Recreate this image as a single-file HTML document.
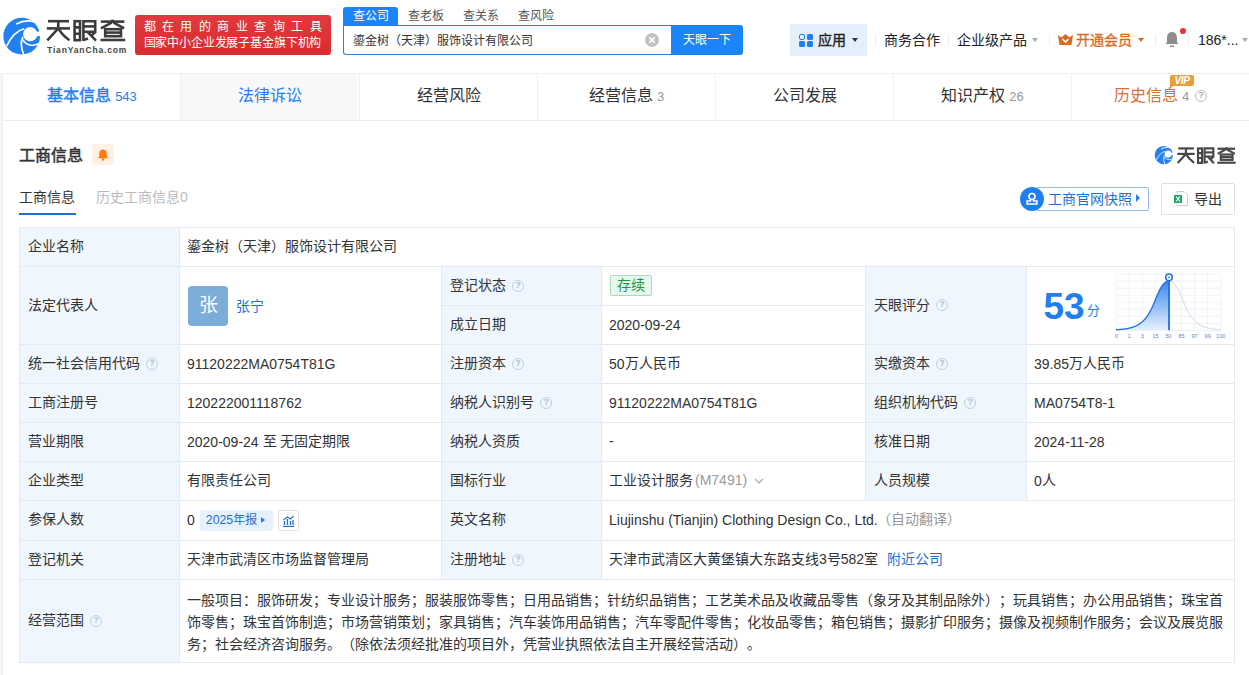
<!DOCTYPE html>
<html lang="zh-CN"><head><meta charset="utf-8">
<style>
*{margin:0;padding:0;box-sizing:border-box}
html,body{width:1249px;height:675px;overflow:hidden}
body{text-spacing-trim:space-all;background:#f5f5f5;font-family:"Liberation Sans",sans-serif;color:#333;font-size:14px;position:relative}
.a{position:absolute;white-space:nowrap}
#hdr{position:absolute;left:0;top:0;width:1249px;height:73px;background:#fff}
#tabs{position:absolute;left:3px;top:74px;width:1246px;height:47px;background:#fff;box-shadow:-1px 0 0 #efefef,0 -1px 0 #efefef;border-bottom:1px solid #ececec}
.tab{position:absolute;top:0;height:46px;width:178px;text-align:center;font-size:16px;line-height:44px;color:#333;border-left:1px solid #f0f0f0}
.tab .n{font-size:14px;color:#999;margin-left:4px}
#card{position:absolute;left:3px;top:121px;width:1246px;height:554px;background:#fff;box-shadow:-1px 0 0 #efefef}
table{position:absolute;left:19px;top:227px;width:1215px;border-collapse:collapse;table-layout:fixed}
td{border:1px solid #e5eaf0;font-size:14px;line-height:22px;padding:7px 8px 9px 7px;vertical-align:middle;color:#333}
td.l{background:#f0f6fd;padding-left:8px}
.d{position:relative;top:1px}
.q{display:inline-block;width:12px;height:12px;border:1.2px solid #bfcfe2;border-radius:50%;font-size:8.5px;line-height:9.6px;text-align:center;color:#aabfd8;font-weight:bold;vertical-align:middle;margin-left:6px;position:relative;top:-0.5px}
</style></head><body>
<div id="hdr">
  <!-- logo -->
  <svg class="a" style="left:0px;top:12px" width="46" height="48" viewBox="0 0 647 675">
    <circle cx="305" cy="340" r="258" fill="#2181f0"/>
    <circle cx="425" cy="312" r="100" fill="#fff"/>
    <path d="M470 290 L660 250 L660 330 L480 345 Z" fill="#fff"/>
    <path d="M228 168 C 320 120 420 110 520 150" stroke="#fff" stroke-width="26" fill="none"/>
    <path d="M95 475 C 160 340 240 260 340 235" stroke="#fff" stroke-width="24" fill="none"/>
    <path d="M335 600 C 300 520 290 420 320 350" stroke="#fff" stroke-width="24" fill="none"/>
    <path d="M320 390 C 370 470 460 490 560 440" stroke="#fff" stroke-width="22" fill="none"/>
  </svg>
  <svg class="a" style="left:45px;top:18px" width="82" height="25" viewBox="45 18 82 25"><g stroke="#3c3c3c" stroke-width="2.6" fill="none" stroke-linecap="butt" stroke-linejoin="miter">
<path d="M48 21.2 H69"/><path d="M46.8 28.4 H70"/><path d="M58.3 21.2 V28.4"/>
<path d="M58.3 28.4 L47.3 40.4"/><path d="M58.3 28.4 Q62 35 69.4 40.2"/>
<rect x="74.6" y="21.2" width="5.4" height="19"/><path d="M74.6 27.4 H80 M74.6 33.8 H80"/>
<path d="M83.4 40.9 V21.2 H95.2 V31.8 H83.4"/><path d="M83.4 26.4 H95.2"/>
<path d="M87.5 31.8 L96 40.6"/><path d="M95.6 31.8 L91.8 35.2"/><path d="M83.4 40 L88 38.4"/>
<path d="M100.8 21.6 H124.4"/><path d="M112.6 19.6 V23"/><path d="M111.6 22.6 L101 28.4"/><path d="M113.6 22.6 L124.2 28.4"/>
<rect x="105.2" y="29.2" width="15.8" height="7"/><path d="M105.2 32.6 H121"/>
<path d="M100.5 40 H125.2"/>
</g></svg>
  <div class="a" style="left:47px;top:44.5px;font-size:8.5px;line-height:10px;font-weight:bold;color:#444;letter-spacing:0.85px">TianYanCha.com</div>
  <!-- banner -->
  <div class="a" style="left:135px;top:15px;width:196px;height:40px;background:linear-gradient(180deg,#e13a3d,#d92c31);border-radius:3px"></div>
  <div class="a" style="left:143.5px;top:19px;font-size:12px;line-height:16px;color:#fff;letter-spacing:6.45px">都在用的商业查询工具</div>
  <div class="a" style="left:143.5px;top:35px;font-size:12px;line-height:16px;color:#fff;letter-spacing:-0.15px">国家中小企业发展子基金旗下机构</div>
  <!-- search -->
  <div class="a" style="left:343px;top:7px;width:55px;height:19px;background:#1b84f8;border-radius:3px 3px 0 0;color:#fff;font-size:12px;line-height:18px;text-align:center">查公司</div>
  <div class="a" style="left:408px;top:7px;font-size:12px;line-height:18px;color:#555">查老板</div>
  <div class="a" style="left:463px;top:7px;font-size:12px;line-height:18px;color:#555">查关系</div>
  <div class="a" style="left:518px;top:7px;font-size:12px;line-height:18px;color:#555">查风险</div>
  <div class="a" style="left:343px;top:25px;width:330px;height:30px;border:1px solid #2a7fe0;border-right:none;border-radius:0 0 0 3px;background:#fff"></div>
  <div class="a" style="left:353px;top:32px;font-size:12px;line-height:18px;color:#333">鎏金树（天津）服饰设计有限公司</div>
  <svg class="a" style="left:645px;top:32.5px" width="14" height="14" viewBox="0 0 14 14"><circle cx="7" cy="7" r="7" fill="#c2c2c2"/><path d="M4.4 4.4 L9.6 9.6 M9.6 4.4 L4.4 9.6" stroke="#fff" stroke-width="1.5"/></svg>
  <div class="a" style="left:671px;top:25px;width:72px;height:30px;background:#1b84f8;border-radius:0 3px 3px 0;color:#fff;font-size:12px;line-height:30px;text-align:center;letter-spacing:0.2px">天眼一下</div>
  <!-- right nav -->
  <div class="a" style="left:790px;top:24px;width:77px;height:32px;background:#e4effc"></div>
  <div class="a" style="left:799px;top:34px;width:6px;height:6px;border:1.5px solid #1f7ef0;border-radius:2px"></div>
  <div class="a" style="left:807px;top:34px;width:6px;height:6px;background:#1f7ef0;border-radius:1.5px"></div>
  <div class="a" style="left:799px;top:41px;width:6px;height:6px;background:#1f7ef0;border-radius:1.5px"></div>
  <div class="a" style="left:807px;top:41px;width:6px;height:6px;background:#1f7ef0;border-radius:1.5px"></div>
  <div class="a" style="left:818px;top:30px;font-size:14px;line-height:20px;color:#222;-webkit-text-stroke:0.35px #222">应用</div>
  <div class="a" style="left:852px;top:38px;width:0;height:0;border-left:3px solid transparent;border-right:3px solid transparent;border-top:4px solid #333"></div>
  <div class="a" style="left:875px;top:34px;width:1px;height:12px;background:#eee"></div>
  <div class="a" style="left:884px;top:30px;font-size:14px;line-height:20px;color:#222">商务合作</div>
  <div class="a" style="left:948px;top:34px;width:1px;height:12px;background:#eee"></div>
  <div class="a" style="left:957px;top:30px;font-size:14px;line-height:20px;color:#222">企业级产品</div>
  <div class="a" style="left:1032px;top:38px;width:0;height:0;border-left:3px solid transparent;border-right:3px solid transparent;border-top:4px solid #aaa"></div>
  <div class="a" style="left:1049px;top:34px;width:1px;height:12px;background:#eee"></div>
  <svg class="a" style="left:1058px;top:34px" width="15" height="11" viewBox="0 0 15 11"><path d="M0 1 L3.5 3.5 L7.5 0 L11.5 3.5 L15 1 L13.5 11 L1.5 11 Z" fill="#d96b1e"/><path d="M4.5 5 L7.5 8 L10.5 5" stroke="#fff" stroke-width="1.6" fill="none"/></svg>
  <div class="a" style="left:1076px;top:30px;font-size:14px;line-height:20px;color:#d96b1e;-webkit-text-stroke:0.35px #d96b1e">开通会员</div>
  <div class="a" style="left:1138px;top:38px;width:0;height:0;border-left:3px solid transparent;border-right:3px solid transparent;border-top:4px solid #d96b1e"></div>
  <div class="a" style="left:1155px;top:34px;width:1px;height:12px;background:#eee"></div>
  <svg class="a" style="left:1165px;top:31px" width="14" height="17" viewBox="0 0 14 17"><path d="M7 1 C3.5 1 2 4 2 7 L2 11 L0.5 13 L13.5 13 L12 11 L12 7 C12 4 10.5 1 7 1 Z" fill="#8c8c8c"/><rect x="5" y="14.5" width="4" height="1.5" fill="#8c8c8c"/></svg>
  <div class="a" style="left:1180px;top:28px;width:6px;height:6px;border-radius:50%;background:#f0303a"></div>
  <div class="a" style="left:1188px;top:34px;width:1px;height:12px;background:#eee"></div>
  <div class="a" style="left:1198px;top:30px;font-size:14px;line-height:20px;color:#222">186*...</div>
  <div class="a" style="left:1242px;top:38px;width:0;height:0;border-left:3px solid transparent;border-right:3px solid transparent;border-top:4px solid #aaa"></div>
</div>

<div id="tabs">
  <div class="tab" style="left:0;border-left:none;color:#1f7ef0;-webkit-text-stroke:0.4px #1f7ef0">基本信息<span class="n" style="color:#1f7ef0;-webkit-text-stroke:0;font-size:13px">543</span></div>
  <div class="tab" style="left:177px;background:#f8f8f8;color:#1f7ef0">法律诉讼</div>
  <div class="tab" style="left:356px">经营风险</div>
  <div class="tab" style="left:534px">经营信息<span class="n" style="font-size:13px">3</span></div>
  <div class="tab" style="left:712px">公司发展</div>
  <div class="tab" style="left:890px">知识产权<span class="n" style="font-size:13px">26</span></div>
  <div class="tab" style="left:1068px;color:#d6713a">历史信息<span class="n" style="font-size:13px">4</span><span class="q" style="border-color:#bbb;color:#aaa">?</span></div>
  <div class="a" style="left:1167px;top:1px;width:24px;height:11px;background:#e6a03a;border-radius:2px;color:#fff;font-size:10px;line-height:11px;font-weight:bold;font-style:italic;text-align:center;letter-spacing:-0.3px">VIP</div><div class="a" style="left:1167px;top:11px;width:0;height:0;border-left:4px solid #e6a03a;border-bottom:4px solid transparent"></div>
</div>


<div id="card">
  <div class="a" style="left:16px;top:24px;font-size:16px;line-height:22px;color:#333;-webkit-text-stroke:0.5px #333">工商信息</div>
  <div class="a" style="left:89px;top:23px;width:22px;height:21px;background:#fff1e3;border-radius:2px"></div>
  <svg class="a" style="left:94px;top:28px" width="12" height="12" viewBox="0 0 12 12"><path d="M6 0.5 C3.5 0.5 2.2 2.5 2.2 5 L2.2 7.5 L1 9.3 L11 9.3 L9.8 7.5 L9.8 5 C9.8 2.5 8.5 0.5 6 0.5 Z" fill="#ff7d10"/><circle cx="6" cy="10.5" r="1.3" fill="#ff7d10"/></svg>
  <!-- small logo right -->
  <svg class="a" style="left:1150px;top:22px" width="23" height="24" viewBox="0 0 647 675">
    <circle cx="305" cy="340" r="258" fill="#2181f0"/>
    <circle cx="425" cy="312" r="100" fill="#fff"/>
    <path d="M470 290 L660 250 L660 330 L480 345 Z" fill="#fff"/>
    <path d="M228 168 C 320 120 420 110 520 150" stroke="#fff" stroke-width="26" fill="none"/>
    <path d="M95 475 C 160 340 240 260 340 235" stroke="#fff" stroke-width="24" fill="none"/>
    <path d="M335 600 C 300 520 290 420 320 350" stroke="#fff" stroke-width="24" fill="none"/>
    <path d="M320 390 C 370 470 460 490 560 440" stroke="#fff" stroke-width="22" fill="none"/>
  </svg>
  <svg class="a" style="left:1173px;top:25px" width="61" height="19" viewBox="45 18 82 25" preserveAspectRatio="none"><g stroke="#484848" stroke-width="2.9" fill="none" stroke-linecap="butt" stroke-linejoin="miter">
<path d="M48 21.2 H69"/><path d="M46.8 28.4 H70"/><path d="M58.3 21.2 V28.4"/>
<path d="M58.3 28.4 L47.3 40.4"/><path d="M58.3 28.4 Q62 35 69.4 40.2"/>
<rect x="74.6" y="21.2" width="5.4" height="19"/><path d="M74.6 27.4 H80 M74.6 33.8 H80"/>
<path d="M83.4 40.9 V21.2 H95.2 V31.8 H83.4"/><path d="M83.4 26.4 H95.2"/>
<path d="M87.5 31.8 L96 40.6"/><path d="M95.6 31.8 L91.8 35.2"/><path d="M83.4 40 L88 38.4"/>
<path d="M100.8 21.6 H124.4"/><path d="M112.6 19.6 V23"/><path d="M111.6 22.6 L101 28.4"/><path d="M113.6 22.6 L124.2 28.4"/>
<rect x="105.2" y="29.2" width="15.8" height="7"/><path d="M105.2 32.6 H121"/>
<path d="M100.5 40 H125.2"/>
</g></svg>
  <!-- subtabs -->
  <div class="a" style="left:16px;top:66px;font-size:14px;line-height:20px;color:#333">工商信息</div>
  <div class="a" style="left:16px;top:92px;width:57px;height:2px;background:#1f6fd0"></div>
  <div class="a" style="left:93px;top:66px;font-size:14px;line-height:20px;color:#bbb">历史工商信息0</div>
  <!-- buttons -->
  <div class="a" style="left:1033px;top:66px;width:113px;height:24px;border:1px solid #8fbdf2;border-radius:2px"></div>
  <div class="a" style="left:1017px;top:66px;width:24px;height:24px;border-radius:50%;background:#1f7ef0"></div>
  <svg class="a" style="left:1022px;top:71px" width="14" height="14" viewBox="0 0 14 14"><circle cx="7" cy="4.5" r="3" stroke="#fff" stroke-width="1.6" fill="none"/><path d="M5.5 7.5 L5.5 9 L2 9 L2 12 L12 12 L12 9 L8.5 9 L8.5 7.5" stroke="#fff" stroke-width="1.4" fill="none"/></svg>
  <div class="a" style="left:1045px;top:68px;font-size:14px;line-height:20px;color:#1f6fd0">工商官网快照</div>
  <div class="a" style="left:1133px;top:73px;width:0;height:0;border-top:4.5px solid transparent;border-bottom:4.5px solid transparent;border-left:4.5px solid #1f7ef0"></div>
  <div class="a" style="left:1158px;top:62px;width:74px;height:32px;border:1px solid #e0e0e0;border-radius:2px"></div>
  <svg class="a" style="left:1171px;top:70px" width="14" height="15" viewBox="0 0 14 15"><path d="M3 0.5 L10 0.5 L13.5 4 L13.5 14.5 L3 14.5 Z" fill="#fff" stroke="#ccc"/><rect x="0" y="4" width="8" height="8" fill="#21a366"/><path d="M2 5.5 L6 10.5 M6 5.5 L2 10.5" stroke="#fff" stroke-width="1.2"/></svg>
  <div class="a" style="left:1191px;top:68px;font-size:14px;line-height:20px;color:#333">导出</div>
</div>
<table>
<colgroup><col style="width:160px"><col style="width:262px"><col style="width:160px"><col style="width:264px"><col style="width:161px"><col style="width:208px"></colgroup>
<tr style="height:39px"><td class="l">企业名称</td><td colspan="5">鎏金树（天津）服饰设计有限公司</td></tr>
<tr style="height:39px"><td class="l" rowspan="2">法定代表人</td><td rowspan="2" style="padding:0 8px"><div style="display:flex;align-items:center"><div style="width:40px;height:40px;border-radius:4px;background:#7cacd8;color:#fff;font-size:19px;line-height:40px;text-align:center">张</div><span style="color:#1f6fd0;margin-left:8px">张宁</span></div></td><td class="l">登记状态<span class="q">?</span></td><td><span style="display:inline-block;margin-left:1px;height:21px;line-height:19px;padding:0 6px;border:1px solid #a6ddb6;background:#e9f8ee;color:#179a3c;border-radius:2px">存续</span></td><td class="l" rowspan="2">天眼评分<span class="q">?</span></td><td rowspan="2" style="padding:0"></td></tr>
<tr style="height:39px"><td class="l">成立日期</td><td><span class="d">2020-09-24</span></td></tr>
<tr style="height:39px"><td class="l">统一社会信用代码<span class="q">?</span></td><td><span class="d">91120222MA0754T81G</span></td><td class="l">注册资本<span class="q">?</span></td><td><span class="d">50</span>万人民币</td><td class="l">实缴资本<span class="q">?</span></td><td><span class="d">39.85</span>万人民币</td></tr>
<tr style="height:39px"><td class="l">工商注册号</td><td><span class="d">120222001118762</span></td><td class="l">纳税人识别号<span class="q">?</span></td><td><span class="d">91120222MA0754T81G</span></td><td class="l">组织机构代码<span class="q">?</span></td><td><span class="d">MA0754T8-1</span></td></tr>
<tr style="height:39px"><td class="l">营业期限</td><td><span class="d">2020-09-24</span> 至 无固定期限</td><td class="l">纳税人资质</td><td>-</td><td class="l">核准日期</td><td><span class="d">2024-11-28</span></td></tr>
<tr style="height:39px"><td class="l">企业类型</td><td>有限责任公司</td><td class="l">国标行业</td><td>工业设计服务<span style="color:#999;margin-left:2px">(M7491)</span><svg width="10" height="6" style="margin-left:7px;vertical-align:middle" viewBox="0 0 10 6"><path d="M1 1 L5 5 L9 1" stroke="#aaa" stroke-width="1.2" fill="none"/></svg></td><td class="l">人员规模</td><td><span class="d">0</span>人</td></tr>
<tr style="height:39px"><td class="l">参保人数</td><td><span class="d">0</span><span style="display:inline-block;margin-left:5px;height:21px;line-height:21px;padding:0 16px 0 6px;background:#e6f1fd;color:#1f6fd0;font-size:12.3px;border-radius:2px;position:relative;vertical-align:middle">2025年报<span style="position:absolute;right:8px;top:7px;border-top:3.5px solid transparent;border-bottom:3.5px solid transparent;border-left:4px solid #1f7ef0"></span></span><span style="display:inline-block;margin-left:5px;width:21px;height:21px;border:1px solid #e3e3e3;border-radius:2px;vertical-align:middle;position:relative"><svg width="13" height="12" style="position:absolute;left:3px;top:4px" viewBox="0 0 13 12"><path d="M1 11.5 L12 11.5" stroke="#1f6fd0" stroke-width="1.3"/><path d="M2.5 10 L2.5 6 M5.5 10 L5.5 4 M8.5 10 L8.5 6 M11 10 L11 5" stroke="#1f6fd0" stroke-width="1.3"/><path d="M1.5 5 L5.5 2 L8.5 4 L11.5 1" stroke="#1f6fd0" stroke-width="1.1" fill="none"/></svg></span></td><td class="l">英文名称</td><td colspan="3"><span class="d">Liujinshu (Tianjin) Clothing Design Co., Ltd.</span><span style="color:#999;margin-left:-1px">（自动翻译）</span></td></tr>
<tr style="height:39px"><td class="l">登记机关</td><td>天津市武清区市场监督管理局</td><td class="l">注册地址<span class="q">?</span></td><td colspan="3">天津市武清区大黄堡镇大东路支线3号582室<span style="color:#1f6fd0;margin-left:9px">附近公司</span></td></tr>
<tr style="height:83px"><td class="l">经营范围<span class="q">?</span></td><td colspan="5" style="line-height:22px;padding:8px 8px 6px 7px">一般项目：服饰研发；专业设计服务；服装服饰零售；日用品销售；针纺织品销售；工艺美术品及收藏品零售（象牙及其制品除外）；玩具销售；办公用品销售；珠宝首<br>饰零售；珠宝首饰制造；市场营销策划；家具销售；汽车装饰用品销售；汽车零配件零售；化妆品零售；箱包销售；摄影扩印服务；摄像及视频制作服务；会议及展览服<br>务；社会经济咨询服务。（除依法须经批准的项目外，凭营业执照依法自主开展经营活动）。</td></tr>
</table>
<div class="a" style="left:1043.5px;top:288.5px;font-size:37px;line-height:36px;font-weight:bold;color:#1f7ef0">53</div><div class="a" style="left:1087px;top:303px;font-size:13px;line-height:16px;color:#1f7ef0">分</div><svg class="a" style="left:1110px;top:266px" width="120" height="76" viewBox="0 0 120 76"><defs><linearGradient id="gf" x1="0" y1="0" x2="0" y2="1"><stop offset="0" stop-color="#3a88f0"/><stop offset="1" stop-color="#e6f0fc"/></linearGradient></defs><line x1="6.30" y1="8.00" x2="6.30" y2="64.48" stroke="#eff3f9" stroke-width="1"/><line x1="19.35" y1="8.00" x2="19.35" y2="64.48" stroke="#eff3f9" stroke-width="1"/><line x1="32.40" y1="8.00" x2="32.40" y2="64.48" stroke="#eff3f9" stroke-width="1"/><line x1="45.45" y1="8.00" x2="45.45" y2="64.48" stroke="#eff3f9" stroke-width="1"/><line x1="58.50" y1="8.00" x2="58.50" y2="64.48" stroke="#eff3f9" stroke-width="1"/><line x1="71.55" y1="8.00" x2="71.55" y2="64.48" stroke="#eff3f9" stroke-width="1"/><line x1="84.60" y1="8.00" x2="84.60" y2="64.48" stroke="#eff3f9" stroke-width="1"/><line x1="97.65" y1="8.00" x2="97.65" y2="64.48" stroke="#eff3f9" stroke-width="1"/><line x1="110.70" y1="8.00" x2="110.70" y2="64.48" stroke="#eff3f9" stroke-width="1"/><line x1="6.30" y1="8.00" x2="110.70" y2="8.00" stroke="#eff3f9" stroke-width="1"/><line x1="6.30" y1="15.06" x2="110.70" y2="15.06" stroke="#eff3f9" stroke-width="1"/><line x1="6.30" y1="22.12" x2="110.70" y2="22.12" stroke="#eff3f9" stroke-width="1"/><line x1="6.30" y1="29.18" x2="110.70" y2="29.18" stroke="#eff3f9" stroke-width="1"/><line x1="6.30" y1="36.24" x2="110.70" y2="36.24" stroke="#eff3f9" stroke-width="1"/><line x1="6.30" y1="43.30" x2="110.70" y2="43.30" stroke="#eff3f9" stroke-width="1"/><line x1="6.30" y1="50.36" x2="110.70" y2="50.36" stroke="#eff3f9" stroke-width="1"/><line x1="6.30" y1="57.42" x2="110.70" y2="57.42" stroke="#eff3f9" stroke-width="1"/><line x1="6.30" y1="64.48" x2="110.70" y2="64.48" stroke="#eff3f9" stroke-width="1"/><polygon points="6.00,63.74 6.25,63.73 6.50,63.72 6.75,63.70 7.00,63.69 7.25,63.67 7.50,63.66 7.75,63.64 8.00,63.63 8.25,63.61 8.50,63.59 8.75,63.58 9.00,63.56 9.25,63.54 9.50,63.52 9.75,63.50 10.00,63.48 10.25,63.46 10.50,63.44 10.75,63.42 11.00,63.39 11.25,63.37 11.50,63.35 11.75,63.32 12.00,63.30 12.25,63.27 12.50,63.24 12.75,63.22 13.00,63.19 13.25,63.16 13.50,63.13 13.75,63.10 14.00,63.07 14.25,63.04 14.50,63.00 14.75,62.97 15.00,62.93 15.25,62.90 15.50,62.86 15.75,62.82 16.00,62.78 16.25,62.74 16.50,62.70 16.75,62.66 17.00,62.61 17.25,62.57 17.50,62.52 17.75,62.47 18.00,62.42 18.25,62.37 18.50,62.32 18.75,62.27 19.00,62.21 19.25,62.16 19.50,62.10 19.75,62.04 20.00,61.98 20.25,61.92 20.50,61.85 20.75,61.79 21.00,61.72 21.25,61.65 21.50,61.58 21.75,61.50 22.00,61.43 22.25,61.35 22.50,61.27 22.75,61.18 23.00,61.10 23.25,61.01 23.50,60.92 23.75,60.83 24.00,60.74 24.25,60.64 24.50,60.54 24.75,60.44 25.00,60.34 25.25,60.23 25.50,60.12 25.75,60.00 26.00,59.89 26.25,59.77 26.50,59.65 26.75,59.52 27.00,59.39 27.25,59.26 27.50,59.12 27.75,58.98 28.00,58.84 28.25,58.70 28.50,58.54 28.75,58.39 29.00,58.23 29.25,58.07 29.50,57.90 29.75,57.73 30.00,57.56 30.25,57.38 30.50,57.19 30.75,57.01 31.00,56.81 31.25,56.61 31.50,56.41 31.75,56.20 32.00,55.99 32.25,55.77 32.50,55.55 32.75,55.32 33.00,55.08 33.25,54.84 33.50,54.59 33.75,54.34 34.00,54.08 34.25,53.81 34.50,53.54 34.75,53.26 35.00,52.98 35.25,52.68 35.50,52.38 35.75,52.08 36.00,51.76 36.25,51.44 36.50,51.11 36.75,50.77 37.00,50.43 37.25,50.07 37.50,49.71 37.75,49.34 38.00,48.96 38.25,48.58 38.50,48.18 38.75,47.78 39.00,47.36 39.25,46.94 39.50,46.51 39.75,46.06 40.00,45.61 40.25,45.15 40.50,44.68 40.75,44.20 41.00,43.71 41.25,43.22 41.50,42.71 41.75,42.19 42.00,41.67 42.25,41.13 42.50,40.59 42.75,40.04 43.00,39.48 43.25,38.92 43.50,38.34 43.75,37.76 44.00,37.18 44.25,36.59 44.50,35.99 44.75,35.39 45.00,34.79 45.25,34.18 45.50,33.58 45.75,32.97 46.00,32.36 46.25,31.75 46.50,31.14 46.75,30.54 47.00,29.94 47.25,29.34 47.50,28.75 47.75,28.16 48.00,27.59 48.25,27.02 48.50,26.46 48.75,25.90 49.00,25.36 49.25,24.83 49.50,24.32 49.75,23.81 50.00,23.32 50.25,22.84 50.50,22.38 50.75,21.93 51.00,21.49 51.25,21.08 51.50,20.67 51.75,20.28 52.00,19.91 52.25,19.55 52.50,19.21 52.75,18.89 53.00,18.57 53.25,18.28 53.50,18.00 53.75,17.74 54.00,17.49 54.25,17.25 54.50,17.03 54.75,16.82 55.00,16.63 55.25,16.45 55.50,16.28 55.75,16.13 56.00,15.99 56.25,15.86 56.50,15.74 56.75,15.64 57.00,15.54 57.25,15.46 57.50,15.39 57.75,15.33 58.00,15.29 58.25,15.25 58.50,15.22 58.75,15.21 59.00,15.20 59.00,64.20 6.00,64.20" fill="url(#gf)"/><polyline points="59.00,15.20 59.25,15.21 59.50,15.22 59.75,15.25 60.00,15.29 60.25,15.33 60.50,15.39 60.75,15.46 61.00,15.54 61.25,15.64 61.50,15.74 61.75,15.86 62.00,15.99 62.25,16.13 62.50,16.28 62.75,16.45 63.00,16.63 63.25,16.82 63.50,17.03 63.75,17.25 64.00,17.49 64.25,17.74 64.50,18.00 64.75,18.28 65.00,18.57 65.25,18.89 65.50,19.21 65.75,19.55 66.00,19.91 66.25,20.28 66.50,20.67 66.75,21.08 67.00,21.49 67.25,21.93 67.50,22.38 67.75,22.84 68.00,23.32 68.25,23.81 68.50,24.32 68.75,24.83 69.00,25.36 69.25,25.90 69.50,26.46 69.75,27.02 70.00,27.59 70.25,28.16 70.50,28.75 70.75,29.34 71.00,29.94 71.25,30.54 71.50,31.14 71.75,31.75 72.00,32.36 72.25,32.97 72.50,33.58 72.75,34.18 73.00,34.79 73.25,35.39 73.50,35.99 73.75,36.59 74.00,37.18 74.25,37.76 74.50,38.34 74.75,38.92 75.00,39.48 75.25,40.04 75.50,40.59 75.75,41.13 76.00,41.67 76.25,42.19 76.50,42.71 76.75,43.22 77.00,43.71 77.25,44.20 77.50,44.68 77.75,45.15 78.00,45.61 78.25,46.06 78.50,46.51 78.75,46.94 79.00,47.36 79.25,47.78 79.50,48.18 79.75,48.58 80.00,48.96 80.25,49.34 80.50,49.71 80.75,50.07 81.00,50.43 81.25,50.77 81.50,51.11 81.75,51.44 82.00,51.76 82.25,52.08 82.50,52.38 82.75,52.68 83.00,52.98 83.25,53.26 83.50,53.54 83.75,53.81 84.00,54.08 84.25,54.34 84.50,54.59 84.75,54.84 85.00,55.08 85.25,55.32 85.50,55.55 85.75,55.77 86.00,55.99 86.25,56.20 86.50,56.41 86.75,56.61 87.00,56.81 87.25,57.01 87.50,57.19 87.75,57.38 88.00,57.56 88.25,57.73 88.50,57.90 88.75,58.07 89.00,58.23 89.25,58.39 89.50,58.54 89.75,58.70 90.00,58.84 90.25,58.98 90.50,59.12 90.75,59.26 91.00,59.39 91.25,59.52 91.50,59.65 91.75,59.77 92.00,59.89 92.25,60.00 92.50,60.12 92.75,60.23 93.00,60.34 93.25,60.44 93.50,60.54 93.75,60.64 94.00,60.74 94.25,60.83 94.50,60.92 94.75,61.01 95.00,61.10 95.25,61.18 95.50,61.27 95.75,61.35 96.00,61.43 96.25,61.50 96.50,61.58 96.75,61.65 97.00,61.72 97.25,61.79 97.50,61.85 97.75,61.92 98.00,61.98 98.25,62.04 98.50,62.10 98.75,62.16 99.00,62.21 99.25,62.27 99.50,62.32 99.75,62.37 100.00,62.42 100.25,62.47 100.50,62.52 100.75,62.57 101.00,62.61 101.25,62.66 101.50,62.70 101.75,62.74 102.00,62.78 102.25,62.82 102.50,62.86 102.75,62.90 103.00,62.93 103.25,62.97 103.50,63.00 103.75,63.04 104.00,63.07 104.25,63.10 104.50,63.13 104.75,63.16 105.00,63.19 105.25,63.22 105.50,63.24 105.75,63.27 106.00,63.30 106.25,63.32 106.50,63.35 106.75,63.37 107.00,63.39 107.25,63.42 107.50,63.44 107.75,63.46 108.00,63.48 108.25,63.50 108.50,63.52 108.75,63.54 109.00,63.56 109.25,63.58 109.50,63.59 109.75,63.61 110.00,63.63 110.25,63.64 110.50,63.66 110.75,63.67 111.00,63.69" fill="none" stroke="#ccd5e1" stroke-width="1"/><polyline points="6.00,63.74 6.25,63.73 6.50,63.72 6.75,63.70 7.00,63.69 7.25,63.67 7.50,63.66 7.75,63.64 8.00,63.63 8.25,63.61 8.50,63.59 8.75,63.58 9.00,63.56 9.25,63.54 9.50,63.52 9.75,63.50 10.00,63.48 10.25,63.46 10.50,63.44 10.75,63.42 11.00,63.39 11.25,63.37 11.50,63.35 11.75,63.32 12.00,63.30 12.25,63.27 12.50,63.24 12.75,63.22 13.00,63.19 13.25,63.16 13.50,63.13 13.75,63.10 14.00,63.07 14.25,63.04 14.50,63.00 14.75,62.97 15.00,62.93 15.25,62.90 15.50,62.86 15.75,62.82 16.00,62.78 16.25,62.74 16.50,62.70 16.75,62.66 17.00,62.61 17.25,62.57 17.50,62.52 17.75,62.47 18.00,62.42 18.25,62.37 18.50,62.32 18.75,62.27 19.00,62.21 19.25,62.16 19.50,62.10 19.75,62.04 20.00,61.98 20.25,61.92 20.50,61.85 20.75,61.79 21.00,61.72 21.25,61.65 21.50,61.58 21.75,61.50 22.00,61.43 22.25,61.35 22.50,61.27 22.75,61.18 23.00,61.10 23.25,61.01 23.50,60.92 23.75,60.83 24.00,60.74 24.25,60.64 24.50,60.54 24.75,60.44 25.00,60.34 25.25,60.23 25.50,60.12 25.75,60.00 26.00,59.89 26.25,59.77 26.50,59.65 26.75,59.52 27.00,59.39 27.25,59.26 27.50,59.12 27.75,58.98 28.00,58.84 28.25,58.70 28.50,58.54 28.75,58.39 29.00,58.23 29.25,58.07 29.50,57.90 29.75,57.73 30.00,57.56 30.25,57.38 30.50,57.19 30.75,57.01 31.00,56.81 31.25,56.61 31.50,56.41 31.75,56.20 32.00,55.99 32.25,55.77 32.50,55.55 32.75,55.32 33.00,55.08 33.25,54.84 33.50,54.59 33.75,54.34 34.00,54.08 34.25,53.81 34.50,53.54 34.75,53.26 35.00,52.98 35.25,52.68 35.50,52.38 35.75,52.08 36.00,51.76 36.25,51.44 36.50,51.11 36.75,50.77 37.00,50.43 37.25,50.07 37.50,49.71 37.75,49.34 38.00,48.96 38.25,48.58 38.50,48.18 38.75,47.78 39.00,47.36 39.25,46.94 39.50,46.51 39.75,46.06 40.00,45.61 40.25,45.15 40.50,44.68 40.75,44.20 41.00,43.71 41.25,43.22 41.50,42.71 41.75,42.19 42.00,41.67 42.25,41.13 42.50,40.59 42.75,40.04 43.00,39.48 43.25,38.92 43.50,38.34 43.75,37.76 44.00,37.18 44.25,36.59 44.50,35.99 44.75,35.39 45.00,34.79 45.25,34.18 45.50,33.58 45.75,32.97 46.00,32.36 46.25,31.75 46.50,31.14 46.75,30.54 47.00,29.94 47.25,29.34 47.50,28.75 47.75,28.16 48.00,27.59 48.25,27.02 48.50,26.46 48.75,25.90 49.00,25.36 49.25,24.83 49.50,24.32 49.75,23.81 50.00,23.32 50.25,22.84 50.50,22.38 50.75,21.93 51.00,21.49 51.25,21.08 51.50,20.67 51.75,20.28 52.00,19.91 52.25,19.55 52.50,19.21 52.75,18.89 53.00,18.57 53.25,18.28 53.50,18.00 53.75,17.74 54.00,17.49 54.25,17.25 54.50,17.03 54.75,16.82 55.00,16.63 55.25,16.45 55.50,16.28 55.75,16.13 56.00,15.99 56.25,15.86 56.50,15.74 56.75,15.64 57.00,15.54 57.25,15.46 57.50,15.39 57.75,15.33 58.00,15.29 58.25,15.25 58.50,15.22 58.75,15.21 59.00,15.20" fill="none" stroke="#1f6fd8" stroke-width="1.3"/><line x1="59.0" y1="13" x2="59.0" y2="64.19999999999999" stroke="#1f6fd8" stroke-width="1.8"/><path d="M56.2 13.300000000000011 L59.0 15.5 L61.8 13.300000000000011 Z" fill="#1f6fd8"/><circle cx="59.0" cy="11.300000000000011" r="3.3" fill="#fff" stroke="#1f6fd8" stroke-width="1.5"/><circle cx="59.0" cy="11.300000000000011" r="0.9" fill="#1f6fd8"/><text x="6.30" y="72.30" font-size="5.5" text-anchor="middle" fill="#5b86c6" font-family="Liberation Sans">0</text><text x="19.35" y="72.30" font-size="5.5" text-anchor="middle" fill="#5b86c6" font-family="Liberation Sans">1</text><text x="32.40" y="72.30" font-size="5.5" text-anchor="middle" fill="#5b86c6" font-family="Liberation Sans">3</text><text x="45.45" y="72.30" font-size="5.5" text-anchor="middle" fill="#5b86c6" font-family="Liberation Sans">15</text><text x="58.50" y="72.30" font-size="5.5" text-anchor="middle" fill="#5b86c6" font-family="Liberation Sans">50</text><text x="71.55" y="72.30" font-size="5.5" text-anchor="middle" fill="#5b86c6" font-family="Liberation Sans">85</text><text x="84.60" y="72.30" font-size="5.5" text-anchor="middle" fill="#5b86c6" font-family="Liberation Sans">97</text><text x="97.65" y="72.30" font-size="5.5" text-anchor="middle" fill="#5b86c6" font-family="Liberation Sans">99</text><text x="110.70" y="72.30" font-size="5.5" text-anchor="middle" fill="#5b86c6" font-family="Liberation Sans">100</text></svg>


</body></html>
